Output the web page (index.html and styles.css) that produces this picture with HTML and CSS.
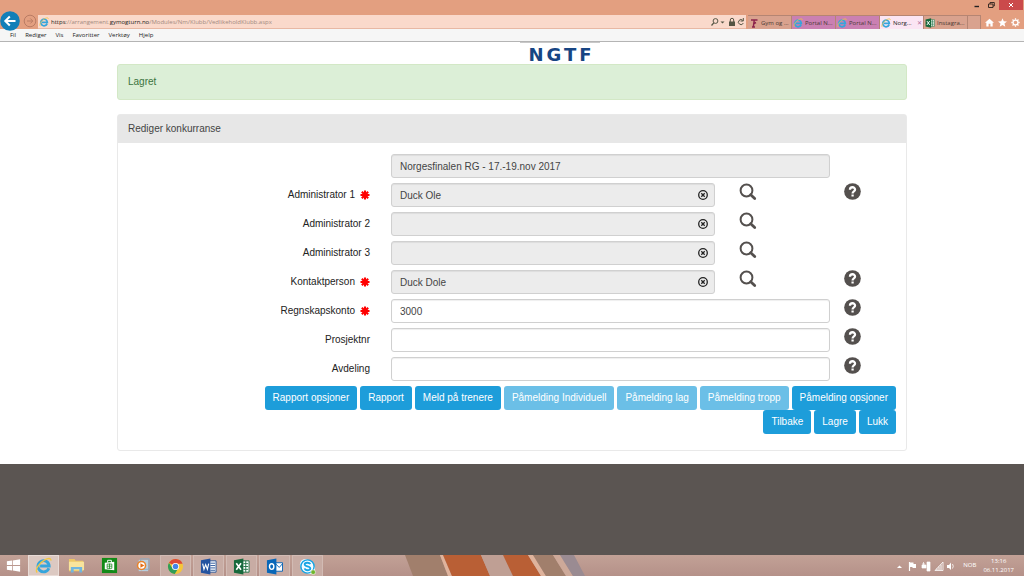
FILE: index.html
```
<!DOCTYPE html>
<html lang="no">
<head>
<meta charset="utf-8">
<title>Rediger konkurranse</title>
<link rel="stylesheet" href="styles.css">
</head>
<body>
<svg class="defs" aria-hidden="true">
  <symbol id="ie" viewBox="0 0 20 20">
    <path d="M16.3 13.200A6.600 6.600 0 1 1 16.700 10.600H6" fill="none" stroke="#35a5dc" stroke-width="3.400"/>
    <path d="M2.600 18.200C-.6 15 5 7 11 3.600 15 1.200 19 .8 18.600 4.200" fill="none" stroke="#f2c744" stroke-width="1.600"/>
  </symbol>
  <symbol id="star" viewBox="0 0 12 12">
    <path d="M6 .6V11.400M.6 6H11.400M2.200 2.200L9.800 9.800M9.800 2.200L2.200 9.800" stroke="#f00" stroke-width="2.500"/>
  </symbol>
  <symbol id="clear" viewBox="0 0 12 12">
    <circle cx="6" cy="6" r="4.300" fill="none" stroke="#222" stroke-width="1.300"/>
    <path d="M4.300 4.300L7.700 7.700M7.700 4.300L4.300 7.700" stroke="#222" stroke-width="1.300"/>
  </symbol>
  <symbol id="search" viewBox="0 0 18 18">
    <circle cx="7.500" cy="7.500" r="5.900" fill="none" stroke="#54504e" stroke-width="2"/>
    <path d="M11.700 11.700L15.700 15.500" stroke="#54504e" stroke-width="2.800" stroke-linecap="round"/>
  </symbol>
  <symbol id="help" viewBox="0 0 18 18">
    <circle cx="9" cy="9" r="8.800" fill="#54504e"/>
    <path d="M6.300 7.200C6.300 3.600 11.700 3.700 11.700 6.900 11.700 8.900 9.100 8.700 9.100 11" fill="none" stroke="#fff" stroke-width="2.400"/>
    <path d="M7.900 12.200H10.300V14.300H7.900Z" fill="#fff"/>
  </symbol>
  <symbol id="excel" viewBox="0 0 18 18">
    <path d="M10 3H17V15H10Z" fill="#fff" stroke="#217346"/>
    <path d="M11 6H16M11 9H16M11 12H16M13.500 3V15" stroke="#217346"/>
    <path d="M1 2.500L11 .5V17.500L1 15.500Z" fill="#17693c"/>
    <path d="M3.500 5.500L8.500 12.500M8.500 5.500L3.500 12.500" stroke="#fff" stroke-width="1.700"/>
  </symbol>
</svg>

<header class="browser">
  <div class="titlebar">
    <button class="win" aria-label="Minimer"><svg viewBox="0 0 10 10"><path d="M2.500 6.500H7" stroke="#222" stroke-width="1.400"/></svg></button>
    <button class="win" aria-label="Gjenopprett"><svg viewBox="0 0 10 10"><path d="M2.500 4H7V7.500H2.500ZM4 4V2.500H8.300V6H7" fill="none" stroke="#3c2c25"/></svg></button>
    <button class="win close" aria-label="Lukk vindu"><svg viewBox="0 0 10 10"><path d="M3 3L7 7M7 3L3 7" stroke="#fff"/></svg></button>
  </div>
  <div class="navbar">
    <button class="back" aria-label="Tilbake"><svg viewBox="0 0 20 20"><circle cx="10" cy="10" r="9.800" fill="#127fb8"/><path d="M15.500 10H5.500M9.800 5.500L5.300 10 9.800 14.500" fill="none" stroke="#fff" stroke-width="2"/></svg></button>
    <button class="forward" aria-label="Fram"><svg viewBox="0 0 14 14"><circle cx="7" cy="7" r="5.800" fill="none" stroke="#ba7c64"/><path d="M4 7H9.500M7.300 4.500L9.800 7 7.300 9.500" fill="none" stroke="#ba7c64"/></svg></button>
    <div class="address">
      <svg class="favicon"><use href="#ie"/></svg>
      <span class="url"><b>https</b>://arrangement.<b>gymogturn.no</b>/Modules/Nm/Klubb/VedlikeholdKlubb.aspx</span>
      <svg class="tools" viewBox="0 0 36 10"><circle cx="5.500" cy="4" r="2.400" fill="none" stroke="#554"/><path d="M3.800 5.800L1.500 8.500" stroke="#554" stroke-width="1.200"/><path d="M10.500 4.500H14.500L12.500 6.500Z" fill="#554"/><path d="M19 4.500H25V9H19Z" fill="#554"/><path d="M20.300 5V3A1.700 1.700 0 0 1 23.700 3V5" fill="none" stroke="#554"/><path d="M32.800 3.400A2.500 2.500 0 1 0 33.300 6M33.300 1V4H30.500" fill="none" stroke="#554"/></svg>
    </div>
    <nav class="tabs">
      <button class="tab"><svg class="favicon" viewBox="0 0 10 10"><path d="M2 2H8.500M5.300 2L4.300 9M3 9H6M5 5.500L7 4.500" stroke="#8d244c" stroke-width="1.500" fill="none"/></svg>Gym og ...</button>
      <button class="tab pink"><svg class="favicon"><use href="#ie"/></svg>Portal N...</button>
      <button class="tab pink"><svg class="favicon"><use href="#ie"/></svg>Portal N...</button>
      <button class="tab active"><svg class="favicon"><use href="#ie"/></svg>Norg...<span class="tab-x">✕</span></button>
      <button class="tab"><svg class="favicon"><use href="#excel"/></svg>Instagra...</button>
      <button class="tab new" aria-label="Ny fane"></button>
    </nav>
    <div class="chrome-icons">
      <svg viewBox="0 0 10 10"><path d="M0 5.300L5 .8 10 5.300H8.500V9.500H6V6.500H4V9.500H1.500V5.300Z" fill="#fff"/></svg>
      <svg viewBox="0 0 10 10"><path d="M5 .2L6.400 3.500 10 3.800 7.200 6.100 8.100 9.600 5 7.700 1.900 9.600 2.800 6.100 0 3.800 3.600 3.500Z" fill="#fff"/></svg>
      <svg viewBox="0 0 10 10"><circle cx="5" cy="5" r="2.700" fill="none" stroke="#fff" stroke-width="1.400"/><path d="M5 .4V2M5 8V9.600M.4 5H2M8 5H9.600M1.700 1.700L3 3M7 7L8.300 8.300M8.300 1.700L7 3M3 7L1.700 8.300" stroke="#fff" stroke-width="1.400"/></svg>
    </div>
  </div>
  <nav class="menubar">
    <button>Fil</button><button>Rediger</button><button>Vis</button><button>Favoritter</button><button>Verktøy</button><button>Hjelp</button>
  </nav>
</header>

<main class="page">
  <div class="banner"><div class="logo">NGTF</div></div>
  <div class="container">
    <div class="alert" role="status">Lagret</div>
    <section class="panel">
      <h1 class="panel-title">Rediger konkurranse</h1>
      <form class="panel-body">
        <div class="row">
          <span></span>
          <input class="field" aria-label="Konkurranse" value="Norgesfinalen RG - 17.-19.nov 2017" readonly>
        </div>
        <div class="row">
          <label for="a1">Administrator 1 <svg class="required"><use href="#star"/></svg></label>
          <div class="lookup"><div class="picker"><input class="field" id="a1" value="Duck Ole" readonly><button type="button" class="clear" aria-label="Tøm"><svg><use href="#clear"/></svg></button></div><button type="button" class="icon search" aria-label="Søk"><svg><use href="#search"/></svg></button></div>
          <button type="button" class="icon help" aria-label="Hjelp"><svg><use href="#help"/></svg></button>
        </div>
        <div class="row">
          <label for="a2">Administrator 2</label>
          <div class="lookup"><div class="picker"><input class="field" id="a2" readonly><button type="button" class="clear" aria-label="Tøm"><svg><use href="#clear"/></svg></button></div><button type="button" class="icon search" aria-label="Søk"><svg><use href="#search"/></svg></button></div>
        </div>
        <div class="row">
          <label for="a3">Administrator 3</label>
          <div class="lookup"><div class="picker"><input class="field" id="a3" readonly><button type="button" class="clear" aria-label="Tøm"><svg><use href="#clear"/></svg></button></div><button type="button" class="icon search" aria-label="Søk"><svg><use href="#search"/></svg></button></div>
        </div>
        <div class="row">
          <label for="kp">Kontaktperson <svg class="required"><use href="#star"/></svg></label>
          <div class="lookup"><div class="picker"><input class="field" id="kp" value="Duck Dole" readonly><button type="button" class="clear" aria-label="Tøm"><svg><use href="#clear"/></svg></button></div><button type="button" class="icon search" aria-label="Søk"><svg><use href="#search"/></svg></button></div>
          <button type="button" class="icon help" aria-label="Hjelp"><svg><use href="#help"/></svg></button>
        </div>
        <div class="row">
          <label for="rk">Regnskapskonto <svg class="required"><use href="#star"/></svg></label>
          <input class="field" id="rk" value="3000">
          <button type="button" class="icon help" aria-label="Hjelp"><svg><use href="#help"/></svg></button>
        </div>
        <div class="row">
          <label for="pn">Prosjektnr</label>
          <input class="field" id="pn">
          <button type="button" class="icon help" aria-label="Hjelp"><svg><use href="#help"/></svg></button>
        </div>
        <div class="row">
          <label for="av">Avdeling</label>
          <input class="field" id="av">
          <button type="button" class="icon help" aria-label="Hjelp"><svg><use href="#help"/></svg></button>
        </div>
        <div class="actions">
          <button type="button" class="btn">Rapport opsjoner</button>
          <button type="button" class="btn">Rapport</button>
          <button type="button" class="btn">Meld på trenere</button>
          <button type="button" class="btn" disabled>Påmelding Individuell</button>
          <button type="button" class="btn" disabled>Påmelding lag</button>
          <button type="button" class="btn" disabled>Påmelding tropp</button>
          <button type="button" class="btn">Påmelding opsjoner</button>
        </div>
        <div class="actions">
          <button type="button" class="btn">Tilbake</button>
          <button type="button" class="btn">Lagre</button>
          <button type="button" class="btn">Lukk</button>
        </div>
      </form>
    </section>
  </div>
</main>

<div class="page-footer"></div>

<footer class="taskbar">
  <svg class="stripes" viewBox="0 0 210 21" aria-hidden="true">
    <path d="M0 0H35L43 21H8Z" fill="#a17f6c"/><path d="M35 0H38L47 21H43Z" fill="#dfb39c"/>
    <path d="M38 0H76L85 21H47Z" fill="#b95f35"/><path d="M76 0H98L108 21H85Z" fill="#bf9f94"/>
    <path d="M98 0H123L136 21H108Z" fill="#b95f35"/><path d="M123 0H128L141 21H136Z" fill="#dfb39c"/>
    <path d="M128 0H148L161 21H141Z" fill="#a17f6c"/><path d="M148 0H155L168 21H161Z" fill="#cda999"/>
    <path d="M155 0H169L180 21H168Z" fill="#9a8b92"/>
  </svg>
  <nav class="apps">
    <button class="app start" aria-label="Start"><svg viewBox="0 0 18 18"><path d="M2 4.500L7.500 3.700V8.600H2ZM8.300 3.600L16 2.500V8.600H8.300ZM2 9.400H7.500V14.300L2 13.500ZM8.300 9.400H16V15.500L8.300 14.400Z" fill="#fff"/></svg></button>
    <button class="app current" aria-label="Internet Explorer"><svg><use href="#ie"/></svg></button>
    <button class="app" aria-label="Filutforsker"><svg viewBox="0 0 18 18"><path d="M1 2H7L8 4H16V15H1Z" fill="#edc765"/><path d="M1 5H17V14H1Z" fill="#f8e49c"/><path d="M3 16.500V10.500H15V16.500H12V13H6V16.500Z" fill="#70b6df"/></svg></button>
    <button class="app" aria-label="Store"><svg viewBox="0 0 18 18"><path d="M1 1H17V17H1Z" fill="#128a18"/><path d="M4 6L14 5V14L4 13Z" fill="#fff"/><path d="M7 6V3.500H11V6" fill="none" stroke="#fff"/><path d="M6.500 7.500H11.500V12H6.500ZM9 7V12.500M6.500 9.700H11.500" stroke="#128a18" stroke-width=".8" fill="none"/></svg></button>
    <button class="app" aria-label="Mediespiller"><svg viewBox="0 0 18 18"><path d="M5 3H15V15H5Z" fill="#b8cfdf"/><path d="M7 2H16V13H7Z" fill="none" stroke="#8eacc3"/><circle cx="8" cy="9" r="5" fill="#ea8328"/><circle cx="8" cy="9" r="3.400" fill="#fff"/><path d="M6.800 6.500L11 9 6.800 11.500Z" fill="#e36d18"/></svg></button>
    <button class="app open" aria-label="Chrome"><svg viewBox="0 0 18 18"><circle cx="9" cy="9" r="8" fill="#f4c63a"/><path d="M9 9L2.100 5A8 8 0 0 1 16.500 6H9Z" fill="#dc4a38"/><path d="M2.100 5A8 8 0 0 0 8.200 17L12 10.800 9 9 5.500 10.500Z" fill="#2f9d58"/><circle cx="9" cy="9" r="3.800" fill="#fff"/><circle cx="9" cy="9" r="2.900" fill="#4384e8"/></svg></button>
    <button class="app open" aria-label="Word"><svg viewBox="0 0 18 18"><path d="M10 3H17V15H10Z" fill="#fff" stroke="#2b579a"/><path d="M11 5.500H16M11 8H16M11 10.500H16M11 13H16" stroke="#2b579a"/><path d="M1 2.500L11 .5V17.500L1 15.500Z" fill="#2453a0"/><path d="M2.800 6L4.200 12 6 7 7.800 12 9.200 6" fill="none" stroke="#fff" stroke-width="1.200"/></svg></button>
    <button class="app open" aria-label="Excel"><svg><use href="#excel"/></svg></button>
    <button class="app open" aria-label="Outlook"><svg viewBox="0 0 18 18"><path d="M10 5H17.500V14H10Z" fill="#fff" stroke="#0a64b4"/><path d="M10 6L14 10 17.500 6" fill="none" stroke="#0a64b4"/><path d="M1 2.500L11 .5V17.500L1 15.500Z" fill="#0867b8"/><ellipse cx="6" cy="9" rx="2.300" ry="3" fill="none" stroke="#fff" stroke-width="1.500"/></svg></button>
    <button class="app open" aria-label="Skype"><svg viewBox="0 0 18 18"><circle cx="6.500" cy="6.500" r="5.500" fill="#f3fbff"/><circle cx="11.500" cy="11.500" r="5.500" fill="#f3fbff"/><circle cx="9" cy="9" r="7" fill="#f3fbff" stroke="#16a5e5" stroke-width="1.500"/><path d="M12 6.500C11 4.400 6 4.500 6 7 6 9.500 12 8.300 12 11 12 13.700 6.500 13.500 6 11" fill="none" stroke="#16a5e5" stroke-width="1.900"/><circle cx="15" cy="15" r="2.500" fill="#70b62c" stroke="#fff" stroke-width=".6"/></svg></button>
  </nav>
  <div class="tray">
    <svg viewBox="0 0 60 12"><path d="M1 8L3.500 5.500 6 8Z" fill="#fff"/><path d="M13.500 2V11" stroke="#fff" stroke-width="1.200"/><path d="M14 2.500H17.500V4H20V8H16.500V7H14Z" fill="#fff"/><path d="M26 4H29M27.500 2V7M26 5H30V8H26ZM31 2H34V11H31Z" fill="#fff" stroke="#fff" stroke-width=".7"/><path d="M39 10.500H47V2Z" fill="none" stroke="#fff" stroke-width=".8"/><path d="M41 10V8.500M43 10V6.500M45 10V4.500" stroke="#fff"/><path d="M51 5H53L55 2.500V10L53 8H51Z" fill="#fff"/><path d="M56.500 4Q58 6.300 56.500 8.500" fill="none" stroke="#fff" stroke-width=".8"/></svg>
    <span>NOB</span>
    <div class="clock"><span>13:16</span><span>06.11.2017</span></div>
  </div>
</footer>
</body>
</html>
```
FILE: styles.css
```
* { box-sizing: border-box; }
body {
  margin: 0;
  min-height: 100vh;
  display: flex;
  flex-direction: column;
  background: #fff;
  color: #333;
  font: 10px/14px "Liberation Sans", Arial, sans-serif;
}
button { border: 0; padding: 0; margin: 0; background: none; color: inherit; font: inherit; }
svg { display: block; }
.defs { position: absolute; width: 0; height: 0; }

/* Browser window */
.browser { font: 6px/12px "Open Sans", "Noto Sans", sans-serif; color: #222; }
.titlebar { height: 11px; display: flex; justify-content: flex-end; background: #e39f80; }
.win { width: 14px; height: 10px; display: flex; justify-content: center; }
.win svg { width: 10px; height: 10px; }
.win.close { width: 24px; margin: 0 1px; background: #cb4a4b; }
.navbar { height: 18px; display: flex; align-items: flex-end; background: #e39f80; }
.back { width: 21px; height: 18px; z-index: 1; }
.back svg { width: 20px; height: 20px; }
.forward { width: 17px; height: 16px; display: flex; align-items: center; justify-content: center; }
.forward svg { width: 14px; height: 14px; }
.address { flex: 1; min-width: 0; height: 14px; display: flex; align-items: center; gap: 2px; padding-left: 1px; background: #fad9cb; border-bottom: 1px solid #e8b8a4; }
.favicon { flex: none; width: 10px; height: 10px; }
.url { flex: 1; overflow: hidden; white-space: nowrap; color: #a28a80; }
.url b { color: #222; font-weight: 400; }
.tools { width: 36px; height: 10px; }
.tabs { display: flex; padding-left: 2px; }
.tab { width: 44px; height: 14px; display: flex; align-items: center; gap: 2px; padding: 0 1px; overflow: hidden; white-space: nowrap; border: solid #b58573; border-width: 1px 1px 0 0; background: #d9a28e; color: #4a3933; }
.tab.pink { background: #ca80b2; }
.tab.active { background: #fbe5f3; color: #222; }
.tab.new { width: 13px; }
.tab-x { margin-left: auto; color: #b06da0; }
.chrome-icons { width: 43px; height: 14px; display: flex; justify-content: center; align-items: center; gap: 4px; }
.chrome-icons svg { width: 9px; height: 9px; }
.menubar { display: flex; gap: 9px; padding: 0 10px; background: #f6f6f6; border-bottom: 1px solid #b4b4b4; }

/* Page */
.page { padding-bottom: 13px; }
.banner { display: flex; justify-content: center; }
.logo {
  margin-left: 96px;
  padding: 3px 5px 0 8px;
  border-top: 1px solid #c8c8c8;
  color: #174583;
  font: bold 18px/18px "DejaVu Sans", Verdana, sans-serif;
  letter-spacing: 3px;
}
.container { width: 100%; max-width: 790px; margin: 0 auto; }
.alert { padding: 10px; border: 1px solid #d3e8c6; border-radius: 3px; background: #dcefd7; color: #3b7440; }
.panel { margin-top: 14px; border: 1px solid #e9e9e9; border-radius: 3px; }
.panel-title { margin: 0; padding: 7px 10px; background: #e7e7e7; font-size: 10px; font-weight: 400; color: #444; }
.panel-body { display: flex; flex-direction: column; padding: 11px 0 16px; }
.row { display: grid; grid-template-columns: 273fr 439fr 76fr; margin-bottom: 5px; }
.row label { display: flex; justify-content: flex-end; align-items: center; gap: 5px; padding-right: 21px; color: #222; }
.required { width: 10px; height: 10px; }
.field {
  width: 100%;
  height: 24px;
  padding: 0 8px;
  border: 1px solid #d0d0d0;
  border-radius: 3px;
  background: #fff;
  color: #444;
  font: inherit;
  box-shadow: inset 0 1px 1px #0001;
}
.field:read-only { background: #ececec; }
.lookup { display: grid; grid-template-columns: 324fr 115fr; }
.picker { position: relative; }
.clear { position: absolute; right: 6px; top: 6px; }
.clear svg { width: 12px; height: 12px; }
.icon { display: flex; align-items: flex-start; }
.search svg { width: 18px; height: 18px; }
.search { padding-left: 24px; }
.help svg { width: 17px; height: 17px; }
.help { padding-left: 14px; }
.actions { display: flex; justify-content: flex-end; gap: 3px; padding-right: 10px; }
.btn { height: 24px; padding: 0 8px; border-radius: 3px; background: #1d9dda; color: #fff; white-space: nowrap; }
.btn:disabled { background: #6bbfe7; }
.page-footer { flex: 1; background: #5b5552; }

/* Taskbar */
.taskbar { position: relative; height: 21px; display: flex; justify-content: space-between; background: linear-gradient(#c2a196, #b59189); color: #fff; font: 6px/9px "Open Sans", "Noto Sans", sans-serif; }
.stripes { position: absolute; left: 405px; top: 0; width: 210px; height: 21px; }
.apps { display: flex; gap: 2px; }
.app { width: 31px; height: 21px; display: flex; align-items: center; justify-content: center; }
.app svg { width: 17px; height: 17px; }
.app.start { width: 26px; }
.app.current { background: #dcc9c2; border: 1px solid #e9dcd7; }
.app.open { background: #c8aca4; border: 1px solid #d2bbb4; border-bottom: 0; }
.tray { display: flex; align-items: center; gap: 7px; padding-right: 10px; }
.tray svg { width: 60px; height: 12px; }
.clock { display: flex; flex-direction: column; align-items: center; }
```
